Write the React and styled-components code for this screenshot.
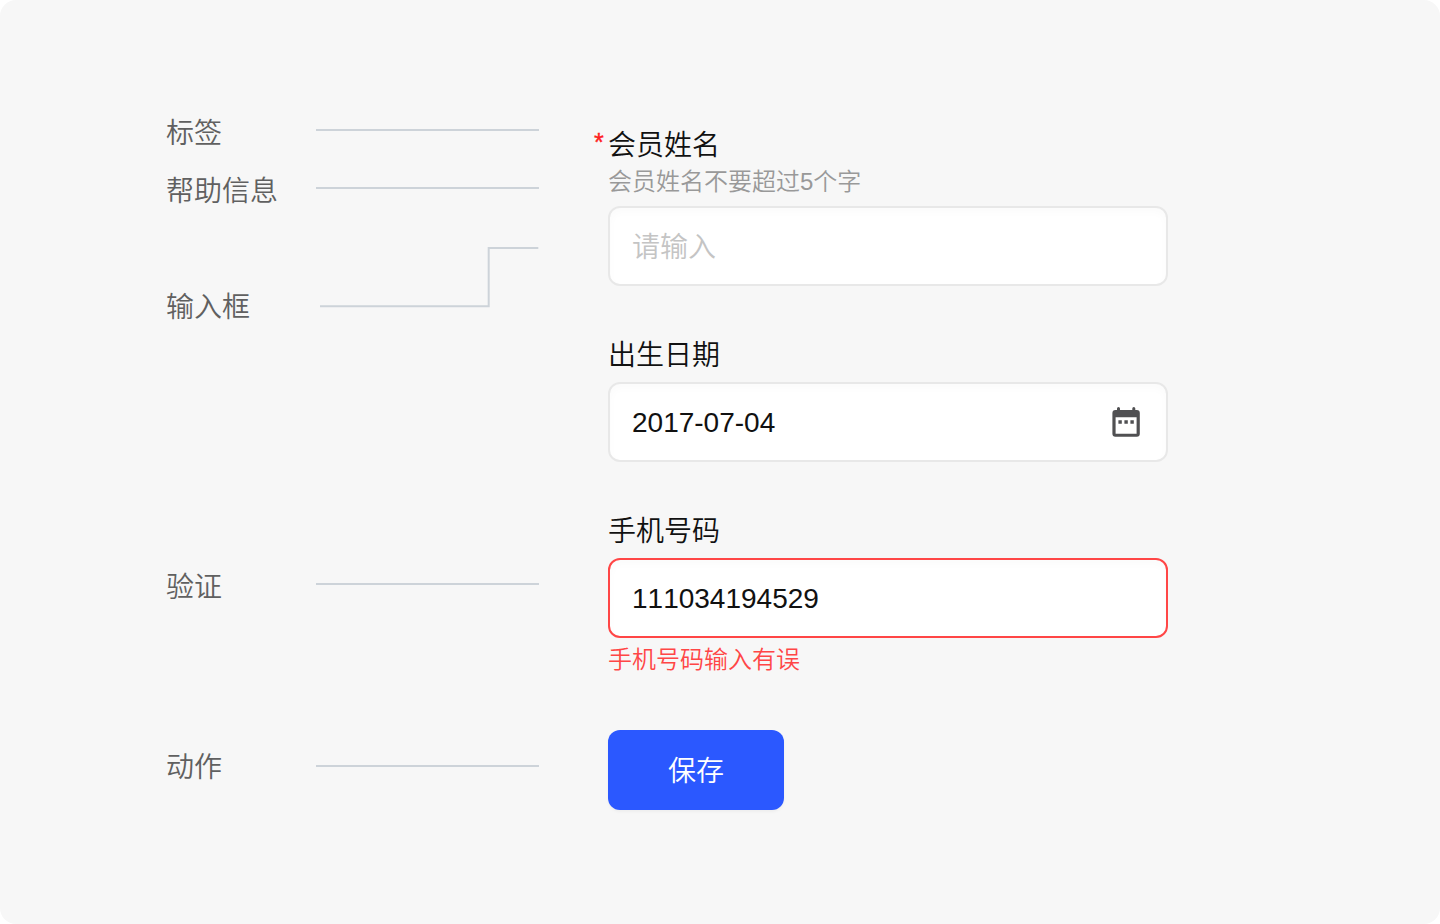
import React from "react";
import styled, { createGlobalStyle } from "styled-components";

const GlobalStyle = createGlobalStyle`
  * { box-sizing: border-box; }
  body {
    margin: 0;
    background: #fff;
    font-family: "Liberation Sans", "Noto Sans CJK SC", sans-serif;
    font-size: 28px;
    font-weight: 350;
    font-kerning: none;
    line-height: 40px;
    color: #111;
  }
`;

const Page = styled.main`
  display: grid;
  grid-template-columns: 373px 560px;
  column-gap: 69px;
  align-items: start;
  width: 1440px;
  height: 924px;
  padding: 110px 0 0 166px;
  border-radius: 16px;
  background: #f7f7f7;
  overflow: hidden;
`;

const Notes = styled.ul`
  display: flex;
  flex-direction: column;
  margin: 0;
  padding: 0;
  list-style: none;
`;

const Note = styled.li`
  display: grid;
  grid-template-columns: 150px 1fr;
  align-items: ${(p) => (p.$stepped ? "start" : "center")};
  height: ${(p) => (p.$stepped ? 78 : 40)}px;
  margin-top: ${(p) => p.$gap || 0}px;
`;

const NoteText = styled.span`
  align-self: end;
  height: 40px;
  line-height: ${(p) => p.$leading}px;
  color: #606060;
  white-space: nowrap;
`;

const Leader = styled.span`
  height: 2px;
  background: #cdd3d9;
`;

const Connector = styled.svg`
  display: block;
  width: 223px;
  height: 62px;
  fill: none;
  stroke: #cdd3d9;
  stroke-width: 2;
`;

const Form = styled.form`
  display: flex;
  flex-direction: column;
  padding-top: 14px;
`;

const Field = styled.div`
  display: flex;
  flex-direction: column;
  margin-bottom: ${(p) => p.$after}px;
`;

const Label = styled.label`
  height: 40px;
  margin-bottom: ${(p) => p.$after}px;
  line-height: 44px;
`;

const Required = styled.span`
  display: inline-block;
  width: 14px;
  margin-left: -14px;
  font-size: 25px;
  line-height: 30px;
  vertical-align: 4px;
  color: #ff2020;
  -webkit-text-stroke: 0.4px #ff2020;
`;

const Help = styled.p`
  height: 34px;
  margin: 0 0 8px;
  font-size: 24px;
  line-height: 36px;
  color: #999;
`;

const ErrorText = styled(Help)`
  margin: 5px 0 0;
  color: #ff4646;
  line-height: 34px;
`;

const InputBox = styled.div`
  display: flex;
  align-items: center;
  justify-content: space-between;
  height: 80px;
  padding: 0 26px 0 22px;
  border: 2px solid ${(p) => (p.$invalid ? "#ff4646" : "#e8e8e8")};
  border-radius: 12px;
  background: #fff;
  box-shadow: inset 0 4px 8px rgba(0, 0, 0, 0.02);
`;

const Value = styled.span`
  height: 40px;
  line-height: ${(p) => (p.$placeholder ? 44 : 42)}px;
  color: ${(p) => (p.$placeholder ? "#c4c4c4" : "#111")};
`;

const CalendarIcon = styled.svg`
  display: block;
  width: 28px;
  height: 30px;
  fill: #505052;
`;

const SaveButton = styled.button`
  width: 176px;
  height: 80px;
  padding: 4px 0 0;
  border: 0;
  border-radius: 12px;
  background: #2b58ff;
  box-shadow: 0 2px 3px rgba(0, 0, 0, 0.04);
  color: #fff;
  font: inherit;
`;

const notes = [
  { text: "标签", leading: 48 },
  { text: "帮助信息", gap: 18, leading: 48 },
  { text: "输入框", gap: 38, stepped: true, leading: 48 },
  { text: "验证", gap: 240, leading: 48 },
  { text: "动作", gap: 142, leading: 44 },
];

export default function App() {
  return (
    <>
      <GlobalStyle />
      <Page>
        <Notes>
          {notes.map((n) => (
            <Note key={n.text} $gap={n.gap} $stepped={n.stepped}>
              <NoteText $leading={n.leading}>{n.text}</NoteText>
              {n.stepped ? (
                <Connector viewBox="0 0 223 62">
                  <path d="M4 60.3H172.7V2H222.3" />
                </Connector>
              ) : (
                <Leader />
              )}
            </Note>
          ))}
        </Notes>
        <Form>
          <Field $after={48}>
            <Label $after={0}>
              <Required>*</Required>会员姓名
            </Label>
            <Help>会员姓名不要超过5个字</Help>
            <InputBox>
              <Value $placeholder>请输入</Value>
            </InputBox>
          </Field>
          <Field $after={48}>
            <Label $after={8}>出生日期</Label>
            <InputBox>
              <Value>2017-07-04</Value>
              <CalendarIcon viewBox="0 0 28 30">
                <path
                  fillRule="evenodd"
                  d="M3.4 3H5V1.5a1.5 1.5 0 0 1 3 0V3H20.3V1.5a1.5 1.5 0 0 1 3 0V3H24.8a3 3 0 0 1 3 3V26.8a3 3 0 0 1-3 3H3.4a3 3 0 0 1-3-3V6a3 3 0 0 1 3-3ZM3.6 10.3V26.8H24.6V10.3Z"
                />
                <path d="M6.4 13.3h3.4v3.4H6.4ZM12.4 13.3h3.4v3.4h-3.4ZM18.4 13.3h3.4v3.4h-3.4Z" />
              </CalendarIcon>
            </InputBox>
          </Field>
          <Field $after={53}>
            <Label $after={8}>手机号码</Label>
            <InputBox $invalid>
              <Value>111034194529</Value>
            </InputBox>
            <ErrorText>手机号码输入有误</ErrorText>
          </Field>
          <SaveButton type="button">保存</SaveButton>
        </Form>
      </Page>
    </>
  );
}
